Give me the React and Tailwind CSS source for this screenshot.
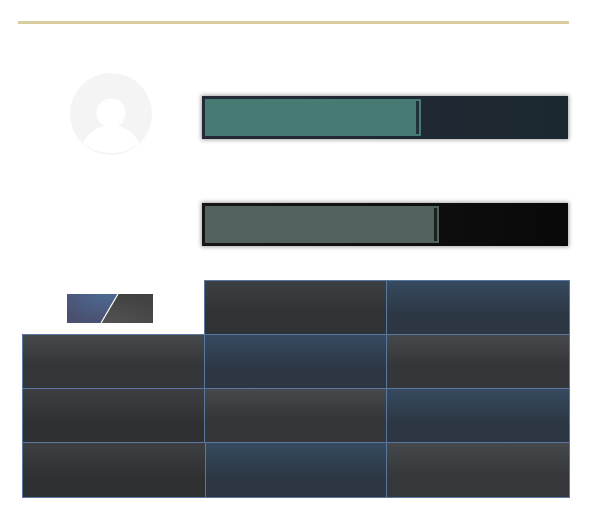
const G = "bg-gradient-to-b from-[#46494c] to-[#353639] from-[0%] to-[55%]";
const D = "bg-gradient-to-b from-[#3d3f42] to-[#2f3032] from-[0%] to-[65%]";
const B = "bg-gradient-to-b from-[#364a60] to-[#2c3743] from-[0%] to-[65%]";
const K = "bg-gradient-to-b from-[#3c4043] to-[#303335] from-[0%] to-[60%]";
const L = "bg-gradient-to-b from-[#45494c] to-[#35373a] from-[0%] to-[60%]";

function Avatar() {
  return (
    <svg width="84" height="84" viewBox="0 0 84 84" className="block">
      <circle cx="42" cy="42" r="41" fill="#f4f4f4" />
      <circle cx="42" cy="41" r="14.5" fill="#ffffff" />
      <path d="M13.5 71 C20 59 31 53 42 53 C53 53 64 59 70.5 71 C62 78 52 81 42 81 C32 81 22 78 13.5 71 Z" fill="#ffffff" />
    </svg>
  );
}

function Bar({ track, fill, knob, width }) {
  return (
    <div className={"h-[43px] w-[366px] p-[3px] flex shadow-[0_0_4px_1px_rgba(0,0,0,0.35)] " + track}>
      <div className={"h-full flex justify-end items-center pr-[2px] " + fill + " " + width}>
        <div className={"w-[3px] h-[33px] " + knob} />
      </div>
    </div>
  );
}

function Flag() {
  return (
    <svg width="86" height="29" viewBox="0 0 86 29" className="block">
      <defs>
        <radialGradient id="fb" cx="0.75" cy="0" r="1">
          <stop offset="0" stopColor="#4d6a92" />
          <stop offset="1" stopColor="#4a5070" />
        </radialGradient>
        <radialGradient id="fg" cx="0.3" cy="1" r="1">
          <stop offset="0" stopColor="#555555" />
          <stop offset="1" stopColor="#424242" />
        </radialGradient>
      </defs>
      <rect width="86" height="29" fill="url(#fg)" />
      <path d="M0 0H51L34 29H0Z" fill="url(#fb)" />
      <path d="M51 0L34 29" stroke="#ffffff" strokeWidth="1.2" />
    </svg>
  );
}

function Cell({ tone, className = "" }) {
  return <div className={"border-[#5a779f] border-t border-l " + tone + " " + className} />;
}

export default function App() {
  return (
    <div className="w-[593px] h-[527px] bg-white pt-[21px] pl-[18px]">
      <div className="w-[551px] h-[3px] bg-[#d9cc9e]" />
      <div className="flex mt-[49px] h-[173px]">
        <div className="w-[184px] pl-[51px] -mt-[1px]"><Avatar /></div>
        <div className="flex flex-col gap-[64px] mt-[23px]">
          <Bar track="bg-gradient-to-r from-[#232a36] to-[#1c2830]" fill="bg-[#487a74]" knob="bg-[#23323a]" width="w-[216px]" />
          <Bar track="bg-gradient-to-r from-[#161616] to-[#090909]" fill="bg-[#53625e]" knob="bg-[#1a2220]" width="w-[234px]" />
        </div>
      </div>
      <div className="ml-[4px] mt-[34px] w-[548px] grid grid-cols-[182px_182px_184px] grid-rows-[54px_54px_54px_56px]">
        <div className="pt-[14px] pl-[45px]"><Flag /></div>
        <Cell tone={K} />
        <Cell tone={B} className="border-r" />
        <Cell tone={G} />
        <Cell tone={B} />
        <Cell tone={G} className="border-r" />
        <Cell tone={D} />
        <Cell tone={G} />
        <Cell tone={B} className="border-r" />
        <Cell tone={D} className="border-b w-[183px]" />
        <Cell tone={B} className="border-b ml-[1px]" />
        <Cell tone={L} className="border-b border-r" />
      </div>
    </div>
  );
}
